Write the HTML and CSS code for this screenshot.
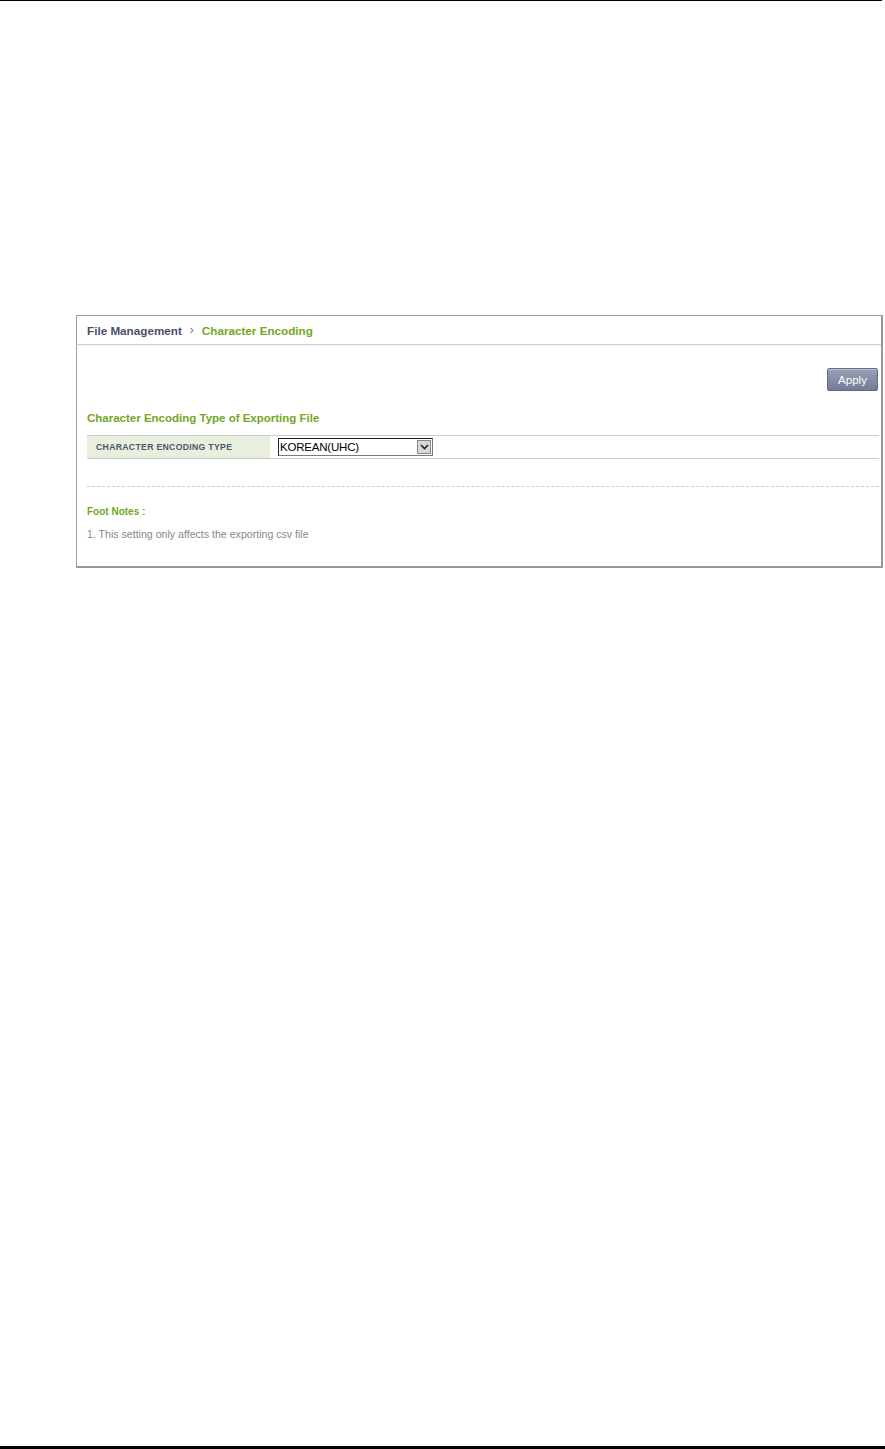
FILE: index.html
```html
<!DOCTYPE html>
<html>
<head>
<meta charset="utf-8">
<link rel="stylesheet" href="styles.css">
</head>
<body>
<div class="page">
  <div class="top-rule"></div>
  <div class="panel">
    <div class="crumbs">
      <span class="crumb-parent">File Management</span>
      <span class="crumb-sep">&#8250;</span>
      <span class="crumb-current">Character Encoding</span>
    </div>
    <div class="body">
      <div class="actions">
        <button class="btn-apply">Apply</button>
      </div>
      <div class="section-title">Character Encoding Type of Exporting File</div>
      <div class="form-row">
        <div class="label-cell">CHARACTER ENCODING TYPE</div>
        <div class="value-cell">
          <div class="select">
            <span class="select-text">KOREAN(UHC)</span>
            <span class="select-btn">
              <svg width="9" height="6" viewBox="0 0 9 6"><path d="M1 1 L4.5 4.5 L8 1" fill="none" stroke="#222" stroke-width="1.6"/></svg>
            </span>
          </div>
        </div>
      </div>
      <div class="dashed"></div>
      <div class="notes-title">Foot Notes :</div>
      <div class="note">1. This setting only affects the exporting csv file</div>
    </div>
  </div>
  <div class="spacer"></div>
  <div class="bottom-rule"></div>
</div>
</body>
</html>
```
FILE: styles.css
```css
html, body {
  margin: 0;
  padding: 0;
  background: #fff;
}
.page {
  height: 1449px;
  display: flex;
  flex-direction: column;
  font-family: "DejaVu Sans", Verdana, sans-serif;
}
.top-rule {
  height: 1px;
  width: 882px;
  background: #000;
}
.spacer { flex: 1; }
.bottom-rule {
  height: 3px;
  background: #000;
}
.panel {
  margin-top: 314px;
  margin-left: 76px;
  width: 804px;
  border: 1px solid #a0a0a0;
  border-right: 2px solid #999;
  border-bottom: 2px solid #999;
  background: #fff;
}
.crumbs {
  height: 28px;
  border-bottom: 1px solid #cfcfcf;
  box-shadow: 0 2px 3px rgba(0,0,0,0.04);
  display: flex;
  align-items: center;
  padding-left: 10px;
  font-family: "Liberation Sans", Arial, sans-serif;
  font-weight: bold;
  font-size: 11.7px;
  gap: 7px;
}
.crumb-parent { color: #4b5068; }
.crumb-sep { color: #777; font-weight: normal; font-size: 12px; margin: 0 1px; }
.crumb-current { color: #72a823; }
.body {
  padding: 23px 2px 26px 10px;
}
.actions {
  display: flex;
  justify-content: flex-end;
}
.btn-apply {
  width: 51px;
  height: 23px;
  margin-right: 1px;
  border: 1px solid #626a84;
  border-radius: 2px;
  background: linear-gradient(#9aa0b6, #737b97);
  color: #fff;
  font-family: "Liberation Sans", Arial, sans-serif;
  font-size: 11.5px;
  padding: 0;
  box-shadow: inset 0 1px 0 rgba(255,255,255,0.35);
}
.section-title {
  margin-top: 20px;
  font-family: "Liberation Sans", Arial, sans-serif;
  font-weight: bold;
  font-size: 11.5px;
  color: #72a823;
  line-height: 14px;
}
.form-row {
  margin-top: 10px;
  display: flex;
  height: 22px;
  border-top: 1px solid #cccccc;
  border-bottom: 1px solid #cccccc;
}
.label-cell {
  width: 174px;
  background: #e9efdf;
  padding-left: 9px;
  display: flex;
  align-items: center;
  font-family: "Liberation Sans", Arial, sans-serif;
  font-weight: bold;
  font-size: 8.7px;
  color: #4f5566;
  letter-spacing: 0.3px;
}
.value-cell {
  padding-left: 8px;
  display: flex;
  align-items: center;
}
.select {
  width: 153px;
  height: 16px;
  border: 1px solid #7a7a7a;
  border-top-color: #222;
  border-left-color: #222;
  display: flex;
  align-items: center;
  justify-content: space-between;
  background: #fff;
}
.select-text {
  font-family: "Liberation Sans", Arial, sans-serif;
  font-size: 11.5px;
  letter-spacing: -0.2px;
  color: #000;
  padding-left: 1px;
}
.select-btn {
  width: 14px;
  height: 14px;
  margin-right: 1px;
  background: #d8d8d8;
  border: 1px solid #888;
  box-sizing: border-box;
  display: flex;
  align-items: center;
  justify-content: center;
}
.dashed {
  margin-top: 27px;
  border-top: 1px dashed #cccccc;
}
.notes-title {
  margin-top: 19px;
  font-family: "Liberation Sans", Arial, sans-serif;
  font-weight: bold;
  font-size: 10px;
  color: #72a823;
  line-height: 12px;
}
.note {
  margin-top: 10px;
  font-family: "Liberation Sans", Arial, sans-serif;
  font-size: 10.6px;
  color: #888;
  line-height: 12px;
}
```
